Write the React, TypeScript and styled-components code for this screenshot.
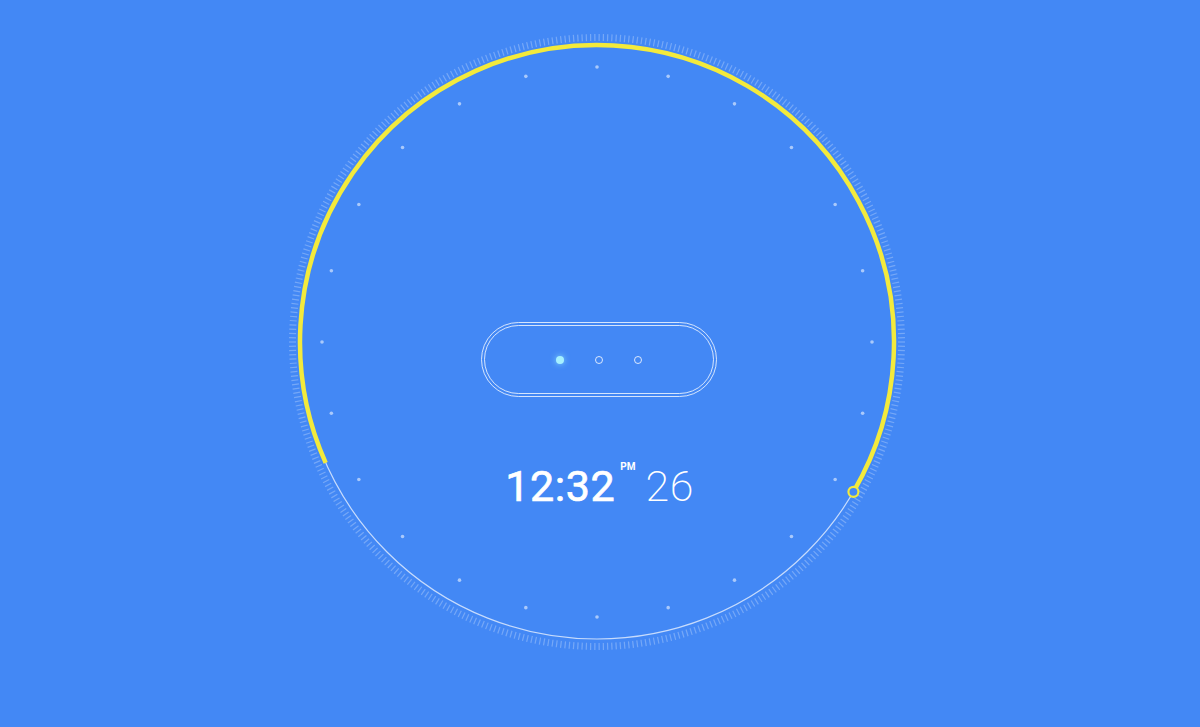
import React from 'react';
import styled, { createGlobalStyle } from 'styled-components';

const GlobalStyle = createGlobalStyle`
  html, body {
    margin: 0;
    padding: 0;
    background: #4388f5;
  }
  body {
    font-family: Roboto, "Liberation Sans", sans-serif;
  }
`;

const Page = styled.div`
  width: 1200px;
  height: 727px;
  overflow: hidden;
  display: flex;
  justify-content: center;
  align-items: flex-start;
  padding: 32px 6px 0 0;
  box-sizing: border-box;
  background: #4388f5;
`;

const Dial = styled.div`
  position: relative;
  width: 620px;
  height: 620px;
  display: flex;
  flex-direction: column;
  align-items: center;
  padding-top: 290px;
  box-sizing: border-box;
`;

const DialArt = styled.svg`
  position: absolute;
  inset: 0;
`;

const Pill = styled.div`
  position: relative;
  width: 236px;
  height: 75px;
  box-sizing: border-box;
  border: 1.4px solid rgba(255, 255, 255, 0.78);
  border-radius: 40px;
  padding: 2px;
  margin-left: 3px;
`;

const PillInner = styled.div`
  height: 100%;
  box-sizing: border-box;
  border: 1.4px solid rgba(255, 255, 255, 0.78);
  border-radius: 36px;
  display: flex;
  align-items: center;
  justify-content: center;
  gap: 31px;
`;

const Dot = styled.span<{ $active?: boolean }>`
  width: 8px;
  height: 8px;
  border-radius: 50%;
  box-sizing: border-box;
  background: ${p => (p.$active ? '#a6f1ff' : 'transparent')};
  border: ${p => (p.$active ? 'none' : '1.4px solid rgba(255, 255, 255, 0.8)')};
  box-shadow: ${p => (p.$active ? '0 0 6px rgba(150, 240, 255, 0.8)' : 'none')};
`;

const TimeRow = styled.div`
  position: relative;
  display: flex;
  align-items: flex-start;
  margin-top: 68px;
  margin-left: 5px;
  color: #ffffff;
  line-height: 1;
`;

const Clock = styled.span`
  font-size: 43px;
  font-weight: 400;
  letter-spacing: 0.6px;
  -webkit-text-stroke: 0.7px #ffffff;
`;

const Meridiem = styled.span`
  font-size: 10px;
  font-weight: 700;
  margin: -3px 10px 0 5px;
`;

const Seconds = styled.span`
  font-size: 43px;
  font-weight: 200;
  letter-spacing: 0.5px;
`;

const C = 310;
const R = 297;
const YELLOW = '#f3ea3c';

const polar = (r: number, deg: number) => {
  const a = (deg * Math.PI) / 180;
  return [C + r * Math.cos(a), C + r * Math.sin(a)];
};

const ticks = Array.from({ length: 450 }, (_, i) => {
  const deg = (i * 360) / 450;
  const [x1, y1] = polar(301, deg);
  const [x2, y2] = polar(308, deg);
  return <line key={i} x1={x1} y1={y1} x2={x2} y2={y2} />;
});

const markers = Array.from({ length: 24 }, (_, i) => {
  const [x, y] = polar(275, i * 15);
  return <circle key={i} cx={x} cy={y} r={1.8} />;
});

const ARC_START = 156;
const ARC_END = 390.3;

const arcPath = () => {
  const [sx, sy] = polar(R, ARC_START);
  const [ex, ey] = polar(R, ARC_END);
  return `M ${sx} ${sy} A ${R} ${R} 0 1 1 ${ex} ${ey}`;
};

const [knobX, knobY] = polar(R, ARC_END);

const App: React.FC = () => {
  return (
    <>
      <GlobalStyle />
      <Page>
        <Dial>
          <DialArt width="620" height="620" viewBox="0 0 620 620">
            <g stroke="rgba(255,255,255,0.27)" strokeWidth="1.2">{ticks}</g>
            <circle cx={C} cy={C} r={R} fill="none" stroke="rgba(255,255,255,0.7)" strokeWidth="1.2" />
            <g fill="rgba(255,255,255,0.55)">{markers}</g>
            <path d={arcPath()} fill="none" stroke={YELLOW} strokeWidth="4.5" />
            <circle cx={knobX} cy={knobY} r={5} fill="#4388f5" stroke={YELLOW} strokeWidth="2.2" />
          </DialArt>

          <Pill>
            <PillInner>
              <Dot $active />
              <Dot />
              <Dot />
            </PillInner>
          </Pill>

          <TimeRow>
            <Clock>12:32</Clock>
            <Meridiem>PM</Meridiem>
            <Seconds>26</Seconds>
          </TimeRow>
        </Dial>
      </Page>
    </>
  );
};

export default App;
